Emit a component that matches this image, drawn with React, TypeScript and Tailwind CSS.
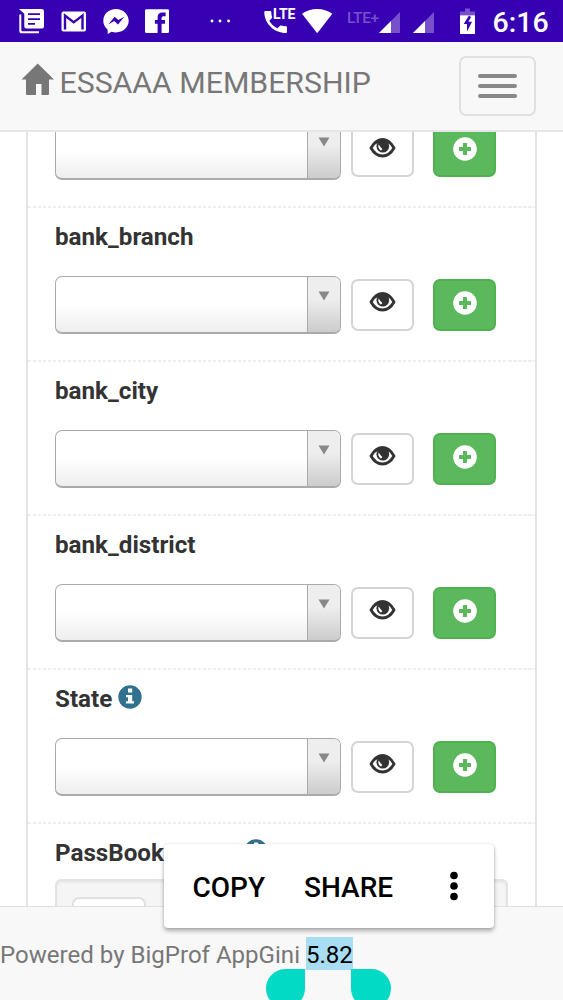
import React from "react";

function StatusBar() {
  return (
    <div className="relative z-10 flex h-[42px] shrink-0 items-start bg-[#3700b3] text-white">
      <svg className="ml-[19px] mt-[9px] h-[25px] w-[26px]" viewBox="0 0 26 25" fill="currentColor">
        <path d="M0.3 5.5V21.7q0 2.6 2.6 2.6H20v-2H3.6q-1.3 0-1.3-1.3V5.5z" />
        <path fillRule="evenodd" d="M0 0H22.6q2.4 0 2.4 2.4V17q0 2.6-2.6 2.6H8Q5.300 19.6 5.300 17V4.800zM9 4.300v1.800H21V4.300zM9 9.200V11h12V9.200zM9 14v1.800h7V14z" />
      </svg>
      <svg className="ml-[16px] mt-[10.500px] h-[21px] w-[26px]" viewBox="0 0 26 21">
        <rect x="0.500" y="0.500" width="24.500" height="20" rx="2" fill="white" />
        <path d="M4 18.500V4.500L12.700 11.300 21.500 4.500V18.500" fill="none" stroke="#3700b3" strokeWidth="2.400" />
        <path d="M3.200 2.200 12.700 9.400 22.300 2.200z" fill="white" />
      </svg>
      <svg className="ml-[16px] mt-[8px] h-[27px] w-[27px]" viewBox="0 0 27 27">
        <path d="M13 1C5.900 1 .3 6 .3 12.800c0 3.700 1.700 6.700 4.400 8.900v4.300l3.900-2.200c1.300.4 2.800.6 4.400.6 7 0 12.700-5 12.700-11.600S20 1 13 1z" fill="white" />
        <path d="M5.300 16.400 11.600 8.700 15.400 12 21.300 8.800 15 16.400 11.200 13.100z" fill="#3700b3" />
      </svg>
      <svg className="ml-[15px] mt-[9px] h-[25px] w-[25px]" viewBox="0 0 25 25">
        <path d="M0 1.500Q0 .3 1.500.3H22.500Q24 .3 24 1.500V22.500Q24 24 22.500 24H16.600V14.800H20V11H16.600V8.900Q16.600 7.200 18.400 7.200H20.600V3.500H17.300Q12.600 3.500 12.600 8.200V11H9.900V14.800H12.600V24H1.500Q0 24 0 22.500z" fill="white" />
      </svg>
      <svg className="ml-[39px] mt-[19px] h-[4px] w-[22px]" viewBox="0 0 22 4" fill="currentColor">
        <circle cx="3" cy="2" r="1.450" />
        <circle cx="11" cy="2" r="1.450" />
        <circle cx="19.600" cy="2" r="1.450" />
      </svg>
      <div className="relative ml-[32.500px] mt-[9px] h-[26px] w-[34px]">
        <svg className="h-[26px] w-[24px]" viewBox="0 0 24 26" fill="currentColor">
          <path d="M1.300 2H6.300Q7.300 2 7.300 3q0 2.600.8 5 .2.700-.3 1.200L5.300 11.700Q8.500 17.200 13.500 19.300L15.800 16.900Q16.400 16.400 17 16.600 19.500 17.300 22 17.300 23 17.300 23 18.300V23Q23 24 22 24C10 24 .3 14.500 .3 3Q.3 2 1.300 2z" />
        </svg>
        <span className="absolute left-[9.500px] top-[-2px] text-[14px] font-bold leading-[15px] tracking-[-0.100px]">LTE</span>
      </div>
      <svg className="ml-[4.500px] mt-[8px] h-[26px] w-[31px]" viewBox="0 0 31 26" fill="currentColor">
        <path d="M0 5.800Q6.500 1 15.200 1T30.300 5.800L16 24.200Q15.200 25.200 14.400 24.200z" />
      </svg>
      <span className="ml-[14px] mt-[9px] w-[33px] whitespace-nowrap text-[15.500px] font-medium leading-[18px] tracking-[-0.400px] text-[#7950cb]">LTE+</span>
      <Signal className="-ml-[1px]" />
      <Signal className="ml-[13px]" />
      <svg className="ml-[25.500px] mt-[8px] h-[26px] w-[16px]" viewBox="0 0 16 26">
        <path d="M5 0.500h5v3h5v4H0v-4h5z" fill="#7950cb" />
        <path d="M0 7.300h15V26H0z" fill="white" />
        <path d="M9 7.500 3.700 16H7V23.500L12 13.800H8.400L11 9z" fill="#3700b3" />
      </svg>
      <span className="ml-[17px] mt-[7px] whitespace-nowrap text-[28.500px] font-medium leading-[32px]">6:16</span>
    </div>
  );
}

function Signal({ className }: { className: string }) {
  return (
    <svg className={`${className} mt-[12px] h-[21px] w-[21px] shrink-0`} viewBox="0 0 21 21">
      <path d="M0 21 21 0V21z" fill="#7950cb" />
      <path d="M0 21 12 9V21z" fill="white" />
    </svg>
  );
}

function Header() {
  return (
    <header className="relative z-10 flex h-[90px] shrink-0 items-start border-b-2 border-[#e6e6e6] bg-[#f8f8f8] text-[#777]">
      <svg className="ml-[21px] mt-[21px] h-[33px] w-[34px]" viewBox="0 0 34 33" fill="currentColor">
        <path d="M16.700.5 33 16.500H28V31q0 1-1 1H20.500V21H15V32H6Q5 32 5 31V16.500H.5z" />
      </svg>
      <span className="ml-[4.500px] mt-[22px] whitespace-nowrap text-[30.250px] leading-[37px]">ESSAAA MEMBERSHIP</span>
      <button className="ml-auto mr-[27px] mt-[14px] flex h-[60px] w-[77px] flex-col items-center justify-center gap-[6.500px] rounded-[7px] border-2 border-[#e0e0e0]">
        <span className="h-[3.700px] w-[39px] rounded-sm bg-[#888]" />
        <span className="h-[3.700px] w-[39px] rounded-sm bg-[#888]" />
        <span className="h-[3.700px] w-[39px] rounded-sm bg-[#888]" />
      </button>
    </header>
  );
}

function InfoIcon({ className }: { className: string }) {
  return (
    <svg className={`${className} h-[24px] w-[24px]`} viewBox="0 0 24 24">
      <circle cx="12" cy="12" r="11.700" fill="#31708f" />
      <path d="M10 3.500h4.200v4H10zM8 10h6.200v6.300H16v2.200H8v-2.200h2v-4H8z" fill="white" />
    </svg>
  );
}

function LookupField({ label, info }: { label?: string; info?: boolean }) {
  return (
    <div className="h-[154px] shrink-0 pl-[27px]">
      <Divider />
      <div className="flex h-[68px] items-start">
        {label && <span className="mt-[13px] whitespace-nowrap text-[24.200px] font-bold leading-[32px] text-[#333]">{label}</span>}
        {info && <InfoIcon className="ml-[6px] mt-[15px]" />}
      </div>
      <div className="flex items-start">
        <div className="flex h-[58px] w-[286px] overflow-hidden rounded-[7px] border border-b-2 border-[#aaa] bg-linear-to-b from-white from-50% to-[#eee]">
          <div className="flex-1" />
          <div className="flex w-[33px] justify-center border-l border-[#aaa] bg-linear-to-t from-[#ccc] to-[#eee] to-60%">
            <svg className="mt-[14px] h-[10px] w-[12px]" viewBox="0 0 12 10">
              <path d="M.5.5h11L6 9.500z" fill="#888" />
            </svg>
          </div>
        </div>
        <button className="ml-[10px] mt-[2.500px] flex h-[52px] w-[63px] justify-center rounded-[7px] border-2 border-[#d4d4d4] bg-white">
          <svg className="mt-[11.500px] h-[20px] w-[27px]" viewBox="0 0 27 20">
            <path d="M2 10Q6.500 1.700 13.500 1.700T25 10Q20.500 18 13.500 18T2 10z" fill="white" stroke="#333" strokeWidth="2.800" strokeLinejoin="round" />
            <path d="M3 7.500Q7 .3 13.500.3T24 7.500L20.200 6Q17 3.500 13.500 3.500T7 6z" fill="#333" />
            <circle cx="13.800" cy="8.200" r="6.300" fill="#333" />
            <path d="M9.700 6.600Q8.300 9.700 11.600 12.400 13 12.400 13.300 11 11.200 9.200 9.700 6.600z" fill="white" />
          </svg>
        </button>
        <button className="ml-[19px] mt-[2.500px] flex h-[52px] w-[63px] justify-center rounded-[7px] border-2 border-[#50b150] bg-[#5cb85c]">
          <svg className="mt-[10px] h-[24px] w-[24px]" viewBox="0 0 24 24">
            <circle cx="12" cy="12" r="11.800" fill="white" />
            <path d="M10 6h4v4h4v4h-4v4h-4v-4H6v-4h4z" fill="#5cb85c" />
          </svg>
        </button>
      </div>
    </div>
  );
}

function Divider() {
  return (
    <div className="-ml-[27px] h-[2px] bg-[repeating-linear-gradient(90deg,#eee_0px,#eee_3.500px,white_3.500px,white_5px)]" />
  );
}

function Footer() {
  return (
    <footer className="relative h-[94px] shrink-0 border-t-[1px] border-[#e0e0e0] bg-[#f8f8f8]">
      <p className="flex pt-[30px] text-[24.050px] leading-[36px] text-[#777]">
        <span className="h-[33px] whitespace-pre">Powered by BigProf AppGini </span>
        <span className="h-[33px] bg-[#a9ddf3] text-black">5.82</span>
      </p>
      <span className="absolute left-[266px] top-[62px] h-[39px] w-[39px] rounded-full rounded-tr-none bg-[#03dac5]" />
      <span className="absolute left-[351px] top-[62px] h-[39px] w-[39.500px] rounded-full rounded-tl-none bg-[#03dac5]" />
    </footer>
  );
}

function SelectionMenu() {
  return (
    <div className="absolute left-[164px] top-[844px] z-20 flex h-[84px] w-[330px] items-center rounded-[4px] bg-white text-[28px] font-medium text-black shadow-[0_3px_4px_rgba(0,0,0,0.3),0_0_2px_rgba(0,0,0,0.15)]">
      <span className="ml-[28.500px] mt-[4px] w-[111.500px]">COPY</span>
      <span className="mt-[4px] w-[146px]">SHARE</span>
      <svg className="h-[30px] w-[8px]" viewBox="0 0 8 30">
        <circle cx="4" cy="4.500" r="3.800" />
        <circle cx="4" cy="15" r="3.800" />
        <circle cx="4" cy="25.500" r="3.800" />
      </svg>
    </div>
  );
}

export default function App() {
  return (
    <div className="relative flex h-[1000px] w-[563px] flex-col overflow-hidden bg-white font-['Roboto',sans-serif]">
      <StatusBar />
      <Header />
      <main className="h-[774px] shrink-0 overflow-hidden">
        <div className="-mt-[80px] ml-[26px] h-[900px] w-[511px] border-x-2 border-[#e4e4e4]">
          <LookupField />
          <LookupField label="bank_branch" />
          <LookupField label="bank_city" />
          <LookupField label="bank_district" />
          <LookupField label="State" info />
          <div className="pl-[27px]">
            <Divider />
            <div className="flex h-[55px] items-start">
              <span className="mt-[13px] w-[189px] text-[24.200px] font-bold leading-[32px] text-[#333]">PassBook</span>
              <InfoIcon className="mt-[14.500px]" />
            </div>
            <div className="h-[80px] w-[453px] rounded-[6px] border-2 border-[#e3e3e3] bg-[#f5f5f5] pl-[15px] pt-[16px] shadow-[inset_0_2px_2px_rgba(0,0,0,0.05)]">
              <div className="h-[50px] w-[74px] rounded-[7px] border-2 border-[#e0e0e0] bg-white" />
            </div>
          </div>
        </div>
      </main>
      <Footer />
      <SelectionMenu />
    </div>
  );
}
